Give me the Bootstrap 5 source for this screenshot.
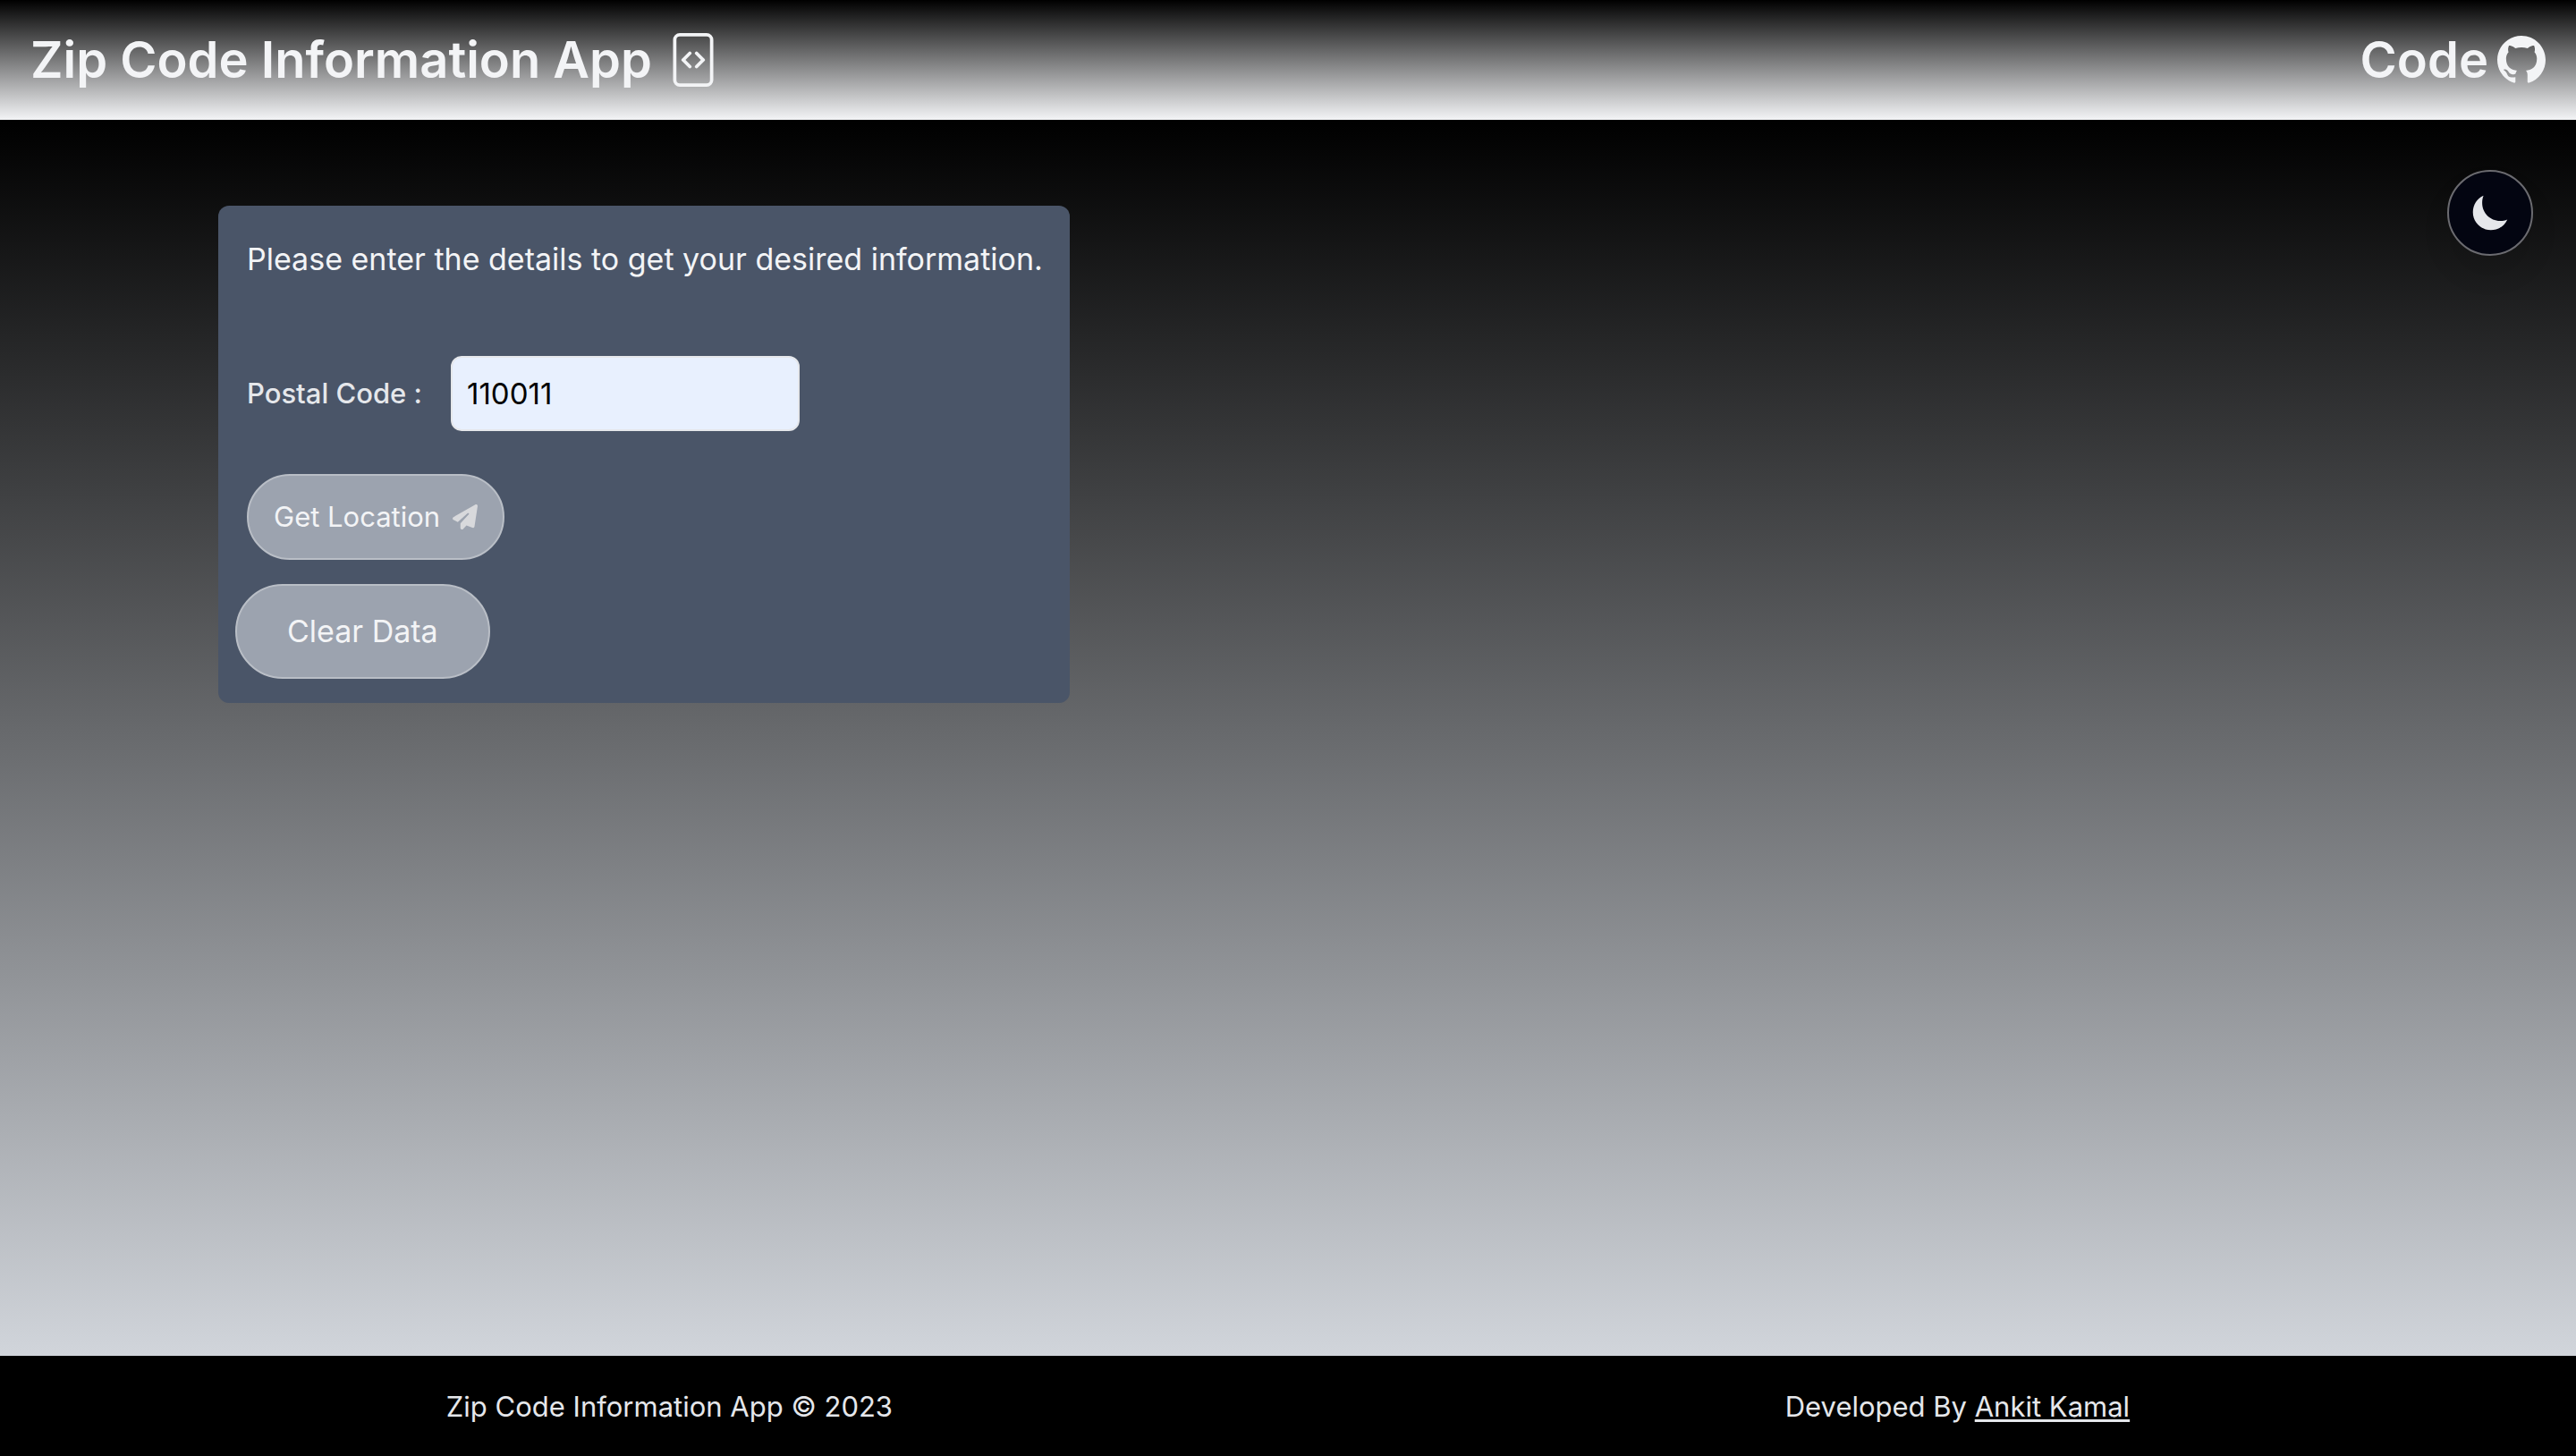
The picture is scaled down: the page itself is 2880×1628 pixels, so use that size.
<!DOCTYPE html>
<html lang="en">
<head>
<meta charset="utf-8">
<meta name="viewport" content="width=device-width, initial-scale=1">
<title>Zip Code Information App</title>
<link href="https://cdn.jsdelivr.net/npm/bootstrap@5.3.0/dist/css/bootstrap.min.css" rel="stylesheet">
<style>
  body { font-family: Inter, "Liberation Sans", sans-serif; font-size: 31px; line-height: 48px; color: #e5e7eb; background: #000; }
  .app-header { padding: 31px 34px; background: linear-gradient(#000, #f3f4f6); }
  .app-title { font-size: 56px; font-weight: 600; line-height: 72px; margin: 0; color: #f3f4f6; }
  .app-title svg { width: 60px; height: 60px; }
  .code-link { gap: 10px; }
  .code-link svg { width: 54px; height: 54px; }
  .app-main { background: linear-gradient(#000, #d1d5db); padding: 56px 48px 96px 244px; }
  .zip-form { width: 952px; max-width: 100%; margin-top: 40px; border-radius: 12px; background: #4a5568; padding: 32px 24px 27px 32px; }
  .intro { font-size: 34px; line-height: 56px; margin: 0 0 80px; color: #f3f4f6; }
  .zip-row { gap: 32px; }
  .zip-label { font-weight: 500; }
  .zip-input { width: 390px; height: 84px; border: 2px solid #e5e7eb; border-radius: 12px; padding: 0 16px; background: #e8f0fe; color: #000; font-size: 33px; }
  .glass-btn { border: 2px solid #b9bec6; background: #9ca3af; color: #f3f4f6; }
  .get-btn { height: 96px; padding: 0 28px; margin-top: 48px; gap: 14px; }
  .get-btn svg { width: 28px; height: 28px; color: #d8d9dc; }
  .clear-btn { height: 106px; padding: 0 56px; font-size: 34px; margin: 27px 0 0 -13px; }
  .theme-btn { width: 96px; height: 96px; border: 2px solid #6b6b70; background: #030511; color: #e5e7eb; box-shadow: 0 20px 30px rgba(0,0,0,.1); }
  .theme-btn svg { width: 44px; height: 44px; }
  .app-footer { padding: 33px 0 31px; background: #000; }
  .app-footer a { color: inherit; text-underline-offset: 3px; text-decoration-thickness: 3px; text-decoration-skip-ink: none; }
</style>
</head>
<body class="d-flex flex-column min-vh-100">
<header class="app-header d-flex align-items-center justify-content-between">
  <h1 class="app-title d-flex align-items-center gap-3">Zip Code Information App
    <svg viewBox="0 0 16 16" fill="currentColor" aria-hidden="true"><path d="M6.646 5.646a.5.5 0 1 1 .708.708L5.707 8l1.647 1.646a.5.5 0 0 1-.708.708l-2-2a.5.5 0 0 1 0-.708l2-2zm2.708 0a.5.5 0 1 0-.708.708L10.293 8 8.646 9.646a.5.5 0 0 0 .708.708l2-2a.5.5 0 0 0 0-.708l-2-2z"/><path d="M2 2a2 2 0 0 1 2-2h8a2 2 0 0 1 2 2v12a2 2 0 0 1-2 2H4a2 2 0 0 1-2-2V2zm10-1H4a1 1 0 0 0-1 1v12a1 1 0 0 0 1 1h8a1 1 0 0 0 1-1V2a1 1 0 0 0-1-1z"/></svg>
  </h1>
  <a href="#" class="app-title code-link d-flex align-items-center text-decoration-none">Code
    <svg viewBox="0 0 16 16" fill="currentColor" aria-hidden="true"><path d="M8 0C3.58 0 0 3.58 0 8c0 3.54 2.29 6.53 5.47 7.59.4.07.55-.17.55-.38 0-.19-.01-.82-.01-1.49-2.01.37-2.53-.49-2.69-.94-.09-.23-.48-.94-.82-1.13-.28-.15-.68-.52-.01-.53.63-.01 1.08.58 1.23.82.72 1.21 1.87.87 2.33.66.07-.52.28-.87.51-1.07-1.78-.2-3.64-.89-3.64-3.95 0-.87.31-1.59.82-2.15-.08-.2-.36-1.02.08-2.12 0 0 .67-.21 2.2.82.64-.18 1.32-.27 2-.27s1.36.09 2 .27c1.53-1.04 2.2-.82 2.2-.82.44 1.1.16 1.92.08 2.12.51.56.82 1.27.82 2.15 0 3.07-1.87 3.75-3.65 3.95.29.25.54.73.54 1.48 0 1.07-.01 1.93-.01 2.2 0 .21.15.46.55.38A8.01 8.01 0 0 0 16 8c0-4.42-3.58-8-8-8z"/></svg>
  </a>
</header>
<main class="app-main flex-grow-1 d-flex justify-content-between align-items-start">
  <form class="zip-form d-flex flex-column align-items-start" onsubmit="return false">
    <p class="intro">Please enter the details to get your desired information.</p>
    <div class="zip-row d-flex align-items-center">
      <label class="zip-label" for="postal">Postal Code :</label>
      <input class="zip-input" id="postal" type="text" value="110011">
    </div>
    <button type="submit" class="glass-btn get-btn rounded-pill d-flex align-items-center">Get Location
      <svg viewBox="0 0 512 512" fill="currentColor" aria-hidden="true"><path d="M498.1 5.6c10.1 7 15.4 19.1 13.5 31.2l-64 416c-1.5 9.7-7.4 18.2-16 23s-18.9 5.4-28 1.6L284 427.7l-68.5 74.1c-8.9 9.7-22.9 12.9-35.2 8.1S160 493.2 160 480V396.4c0-4 1.5-7.8 4.2-10.7L331.8 202.8c5.8-6.3 5.6-16-.4-22s-15.7-6.4-22-.7L106 360.8 17.7 316.6C7.1 311.3 .3 300.7 0 288.9s5.9-22.8 16.1-28.7l448-256c10.7-6.1 23.9-5.5 34 1.4z"/></svg>
    </button>
    <button type="reset" class="glass-btn clear-btn rounded-pill">Clear Data</button>
  </form>
  <button type="button" class="theme-btn rounded-circle d-flex align-items-center justify-content-center p-0" aria-label="Toggle dark mode">
    <svg viewBox="0 0 512 512" fill="currentColor" aria-hidden="true"><path d="M152.62 126.77c0-33 4.85-66.35 17.23-94.77C87.54 67.83 32 151.89 32 247.38 32 375.85 136.15 480 264.62 480c95.49 0 179.55-55.54 215.38-137.85-28.42 12.38-61.8 17.23-94.77 17.23-128.47 0-232.61-104.14-232.61-232.61z"/></svg>
  </button>
</main>
<footer class="app-footer d-flex align-items-center justify-content-around">
  <span>Zip Code Information App © 2023</span>
  <span>Developed By <a href="#">Ankit Kamal</a></span>
</footer>
<script src="https://cdn.jsdelivr.net/npm/bootstrap@5.3.0/dist/js/bootstrap.bundle.min.js"></script>
</body>
</html>
